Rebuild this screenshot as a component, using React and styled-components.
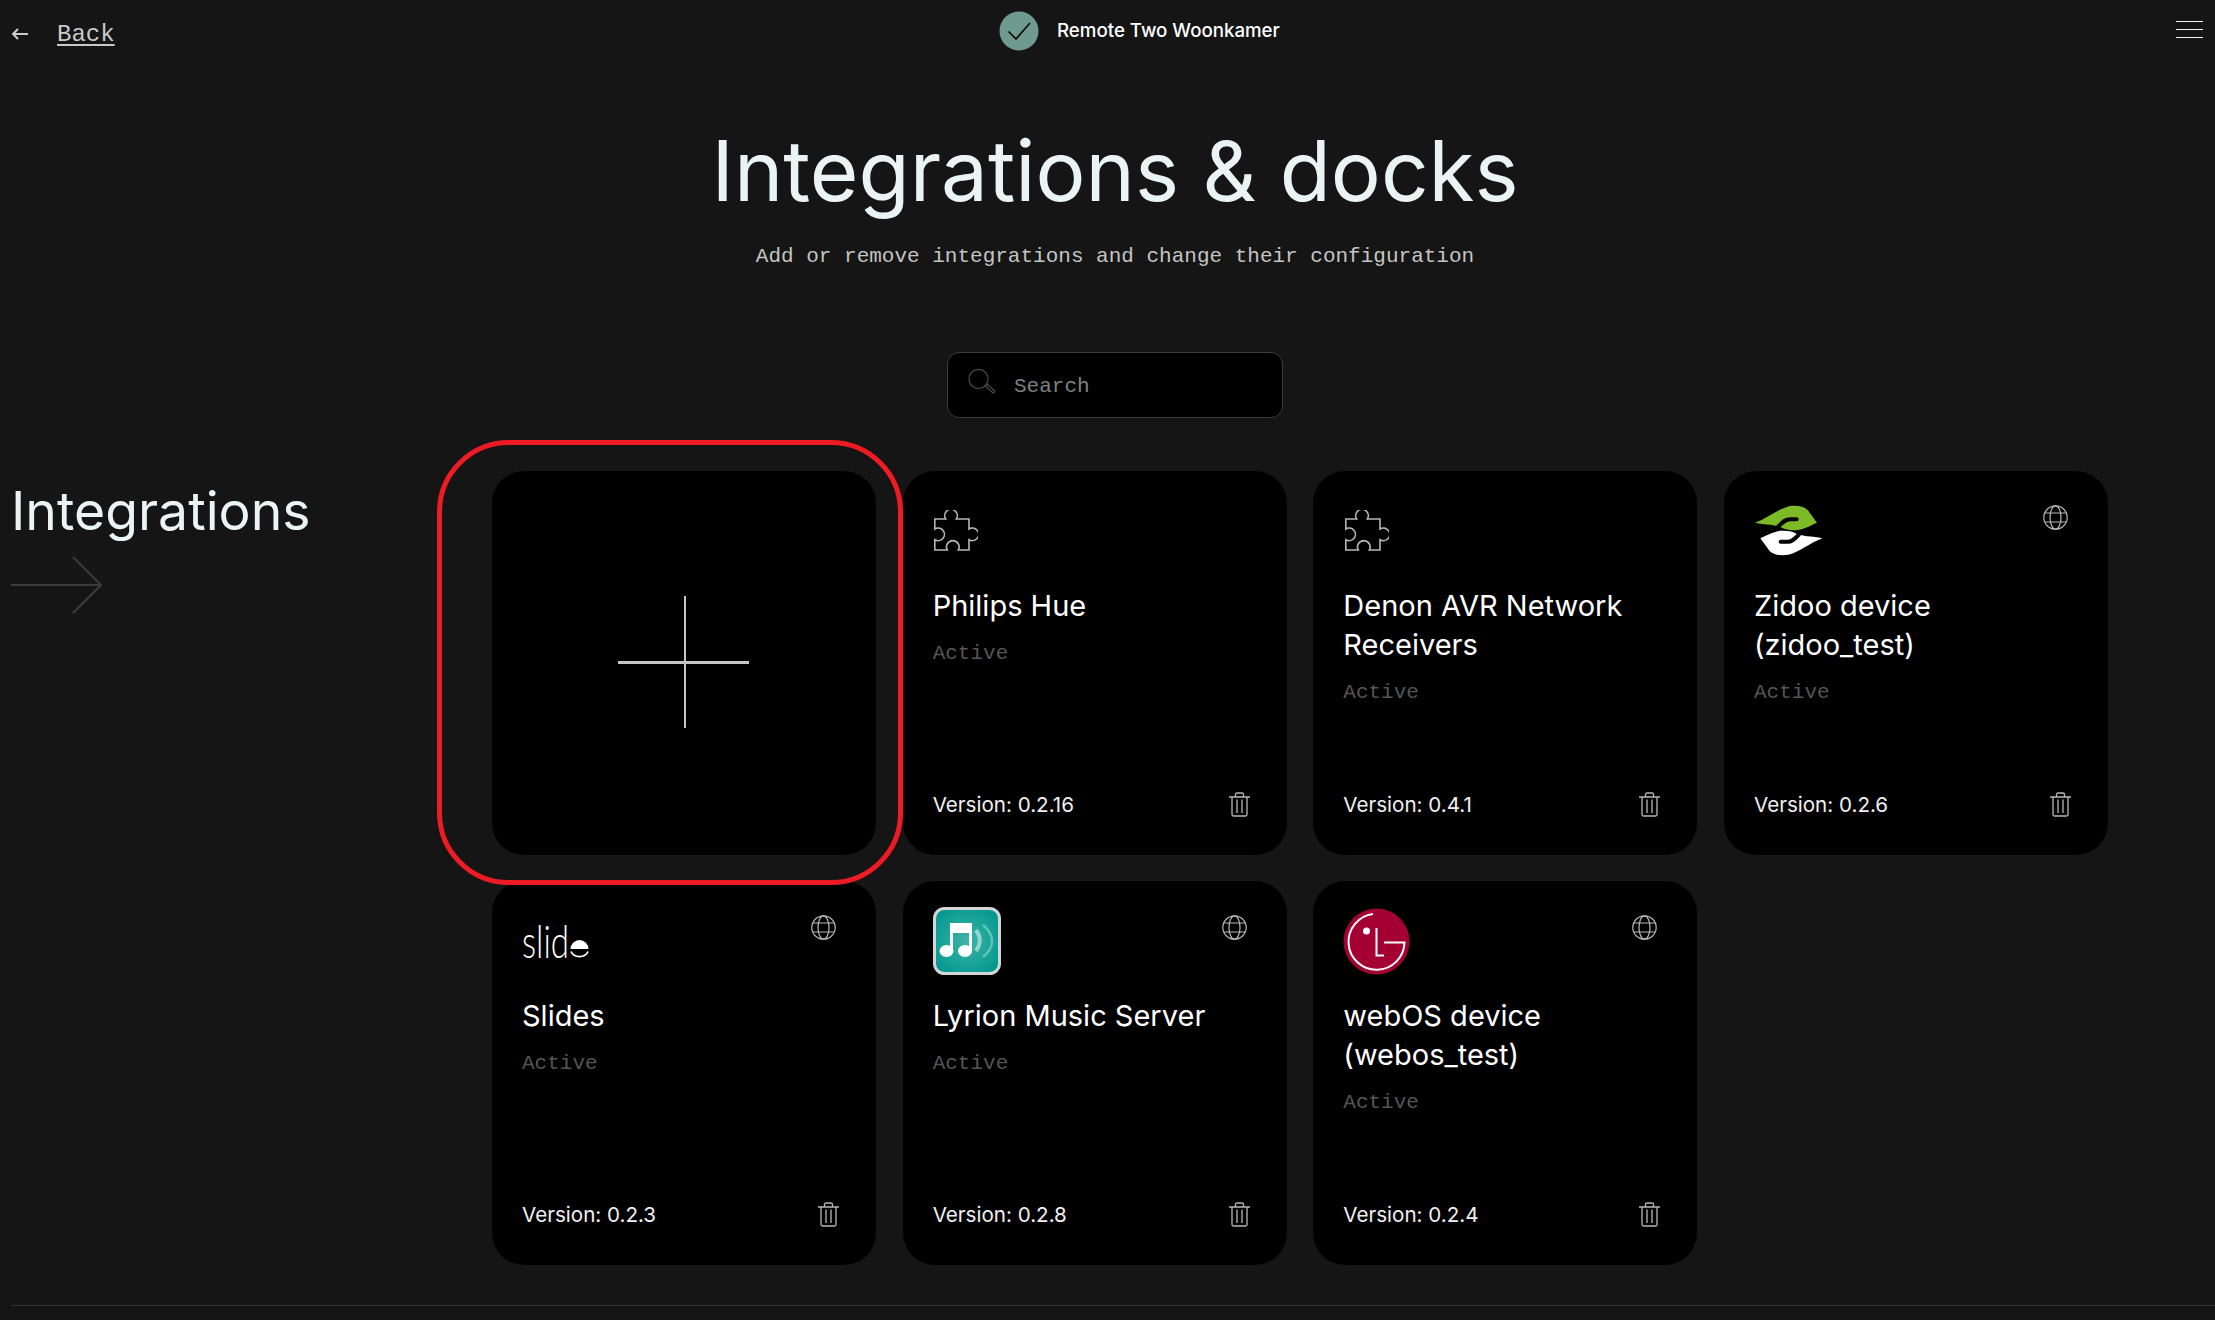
import React from 'react'
import styled, { createGlobalStyle } from 'styled-components'

const GlobalStyle = createGlobalStyle`
  html, body {
    margin: 0;
    padding: 0;
    background: #151515;
    color: #fff;
    font-family: Inter, "Liberation Sans", sans-serif;
  }
  * { box-sizing: border-box; }
`

// [Icons]
const ArrowBack = () => (
  <svg width="17" height="12" viewBox="0 0 17 12" fill="none" stroke="#ccc" strokeWidth="2">
    <path d="M17 6H2M7 1L2 6l5 5" />
  </svg>
)

const CheckIcon = () => (
  <svg width="40" height="40" viewBox="0 0 40 40" fill="none">
    <circle cx="20" cy="20" r="19.5" fill="#6f9a8e" />
    <path d="M9.5 20.5l7.5 7.5L31 12" stroke="#050505" strokeWidth="1.6" />
  </svg>
)

const SearchIcon = () => (
  <svg width="30" height="30" viewBox="0 0 30 30" fill="none" stroke="#4a4a4a" strokeWidth="1.2">
    <circle cx="11.5" cy="11" r="9.6" />
    <path d="M18.5 18l2-1.6 7 6.6c.7.8-.9 2.5-1.8 1.8z" />
  </svg>
)

const Puzzle = () => (
  <svg width="44" height="42" viewBox="0 0 44 42" fill="none" stroke="#b5b5b5" strokeWidth="1.6">
    <path d="M.8 9H11.7A6.3 6.3 0 1 1 22.3 9H35V19A6.3 6.3 0 1 1 35 29.7V40H24.3A6.3 6.3 0 1 0 13.3 40H.8V29.7A6.3 6.3 0 1 0 .8 19Z" />
  </svg>
)

const ZidooHalf = () => (
  <>
    <path d="M103 160C140 146 170 120 205 110C235 106 257 112 267 130L289 160C265 171 245 182 225 182C207 183 190 180 178 172L150 166C132 165 116 163 103 160Z" fill="currentColor" />
    <path d="M228 149H208C194 149 186 158 172 172" stroke="#000" strokeWidth="12" strokeLinecap="round" fill="none" />
  </>
)

const ZidooLogo = () => (
  <svg width="70" height="52" viewBox="100 107 210 155">
    <g color="#7dbb26"><ZidooHalf /></g>
    <g color="#fff" transform="rotate(180 204 183)"><ZidooHalf /></g>
  </svg>
)

const SlideLogo = () => (
  <svg width="68" height="36" viewBox="0 0 68 36" overflow="visible">
    <text x="0" y="35" fontFamily="Lato, sans-serif" fontWeight="300" fontSize="45" fill="#fff" textLength="47" lengthAdjust="spacingAndGlyphs">slid</text>
    <path d="M48.500 26a9 9 0 0 1 18 0z" fill="#fff" />
    <path d="M49 28.500a9 7.500 0 0 0 17 0" stroke="#fff" strokeWidth="1.8" fill="none" />
  </svg>
)

const LyrionLogo = () => (
  <svg width="68" height="68" viewBox="0 0 68 68">
    <defs>
      <radialGradient id="lyrionBg" cx="50%" cy="50%" r="60%">
        <stop offset="0%" stopColor="#3fb3a6" />
        <stop offset="100%" stopColor="#03988f" />
      </radialGradient>
    </defs>
    <rect x="1.500" y="1.500" width="65" height="65" rx="10" fill="url(#lyrionBg)" stroke="#d4d6d6" strokeWidth="3" />
    <path d="M17 16H39V44H36V26H20V44H17Z" fill="#fff" />
    <ellipse cx="13.500" cy="44" rx="7" ry="6" fill="#fff" />
    <ellipse cx="32" cy="44" rx="7" ry="6" fill="#fff" />
    <path d="M43 23c5 7 5 14 0 21" stroke="#8fd6cd" strokeWidth="4" fill="none" />
    <path d="M50 18c12 10 12 22 0 32" stroke="#5dc4b8" strokeWidth="2.500" fill="none" />
  </svg>
)

const LgLogo = () => (
  <svg width="67" height="67" viewBox="0 0 67 67">
    <circle cx="33.500" cy="33.500" r="33" fill="#a50034" />
    <circle cx="23.500" cy="23" r="3.500" fill="#fff" />
    <path d="M33.500 20V47.500H41" stroke="#fff" strokeWidth="2" fill="none" />
    <path d="M41 34.500H61.500A28 28 0 1 1 30 6" stroke="#fff" strokeWidth="2" fill="none" />
  </svg>
)

const Globe = () => (
  <svg width="25" height="25" viewBox="0 0 25 25" fill="none" stroke="#b8b8b8" strokeWidth="1.200">
    <circle cx="12.500" cy="12.500" r="11.700" />
    <ellipse cx="12.500" cy="12.500" rx="5.500" ry="11.700" />
    <path d="M2 8h21M2 17h21" />
  </svg>
)

const Trash = () => (
  <svg width="21" height="25" viewBox="0 0 21 25" fill="none" stroke="#b8b8b8" strokeWidth="1.300">
    <path d="M0 5H21M6.500 5V2.500C6.500 1.500 7 1 8 1H13C14 1 14.500 1.500 14.500 2.500V5" />
    <path d="M3 5V22.500C3 23.500 3.500 24 4.500 24H16.500C17.500 24 18 23.500 18 22.500V5M8 7.500V21M13 7.500V21" />
  </svg>
)

const integrations = [
  { name: 'Philips Hue', version: '0.2.16', icon: <Puzzle />, plain: true },
  { name: 'Denon AVR Network Receivers', version: '0.4.1', icon: <Puzzle />, plain: true },
  { name: 'Zidoo device (zidoo_test)', version: '0.2.6', icon: <ZidooLogo />, network: true },
  { name: 'Slides', version: '0.2.3', icon: <SlideLogo />, network: true },
  { name: 'Lyrion Music Server', version: '0.2.8', icon: <LyrionLogo />, network: true },
  { name: 'webOS device (webos_test)', version: '0.2.4', icon: <LgLogo />, network: true },
]

const App = () => (
  <Page>
    <GlobalStyle />
    <TopBar>
      <BackLink href="#back">
        <ArrowBack />
        <BackText>Back</BackText>
      </BackLink>
      <DockStatus>
        <CheckIcon />
        <DockName>Remote Two Woonkamer</DockName>
      </DockStatus>
      <Hamburger>
        <span />
        <span />
        <span />
      </Hamburger>
    </TopBar>

    <Hero>
      <Title>Integrations &amp; docks</Title>
      <Subtitle>Add or remove integrations and change their configuration</Subtitle>
      <SearchBox>
        <SearchIcon />
        <SearchInput placeholder="Search" />
      </SearchBox>
    </Hero>

    <Section>
      <SectionHead>
        <SectionTitle>Integrations</SectionTitle>
        <svg width="92" height="58" viewBox="0 0 92 58" fill="none" stroke="#3c3c3c" strokeWidth="2">
          <path d="M0 29H90M62 1l28 28-28 28" />
        </svg>
      </SectionHead>
      <CardGrid>
        <AddCell>
          <AddCard>
            <svg width="131" height="132" viewBox="0 0 131 132" fill="#c6c6c6">
              <rect x="0" y="65" width="131" height="3" />
              <rect x="66" y="0" width="2" height="132" />
            </svg>
          </AddCard>
          <Highlight />
        </AddCell>
        {integrations.map((item) => (
          <Card key={item.name}>
            <CardTop>
              <LogoSlot $plain={item.plain}>{item.icon}</LogoSlot>
              {item.network && <Globe />}
            </CardTop>
            <CardName>{item.name}</CardName>
            <CardState>Active</CardState>
            <CardBottom>
              <span>Version: {item.version}</span>
              <Trash />
            </CardBottom>
          </Card>
        ))}
      </CardGrid>
    </Section>
    <FooterLine />
  </Page>
)

const Page = styled.div`
  height: 1320px;
  overflow: hidden;
  background: #151515;
`

const TopBar = styled.header`
  display: grid;
  grid-template-columns: 999px auto 1fr;
  align-items: center;
  height: 62px;
  padding: 0 12px 0 11px;
`

const BackLink = styled.a`
  display: flex;
  align-items: center;
  gap: 29px;
  padding-top: 6px;
  color: #c9c9c9;
  text-decoration: none;
`

const BackText = styled.span`
  font: 24px "Liberation Mono", monospace;
  text-decoration: underline;
  text-underline-offset: 3px;
`

const DockStatus = styled.div`
  display: flex;
  align-items: center;
  gap: 18px;
  margin-left: -11px;
`

const DockName = styled.span`
  font-size: 18.7px;
  font-weight: 500;
  color: #fff;
  margin-bottom: 2px;
`

const Hamburger = styled.div`
  display: flex;
  flex-direction: column;
  gap: 7px;
  justify-self: end;
  width: 27px;
  margin-bottom: 4px;

  span {
    height: 1px;
    background: #f2f2f2;
  }
`

const Hero = styled.section`
  display: flex;
  flex-direction: column;
  align-items: center;
  padding-left: 15px;
  padding-top: 61px;
`

const Title = styled.h1`
  margin: 0;
  font-size: 83.5px;
  line-height: 96px;
  font-weight: 400;
  color: #eaf4f4;
  white-space: nowrap;
`

const Subtitle = styled.p`
  margin: 24px 0 0;
  font: 21px/28px "Liberation Mono", monospace;
  color: #c4c4c4;
`

const SearchBox = styled.div`
  display: flex;
  align-items: center;
  gap: 17px;
  width: 336px;
  height: 66px;
  margin-top: 81px;
  padding: 0 19px 4px;
  background: #000;
  border: 1px solid #3c3c3c;
  border-radius: 12px;
`

const SearchInput = styled.input`
  flex: 1;
  min-width: 0;
  border: none;
  outline: none;
  background: transparent;
  padding: 6px 0 0;
  font: 21px "Liberation Mono", monospace;
  color: #808080;

  &::placeholder {
    color: #808080;
    opacity: 1;
  }
`

const Section = styled.section`
  display: grid;
  grid-template-columns: 481px 1fr;
  margin-top: 53px;
  padding-left: 11px;
`

const SectionHead = styled.div`
  display: flex;
  flex-direction: column;
  align-items: flex-start;
  padding-top: 7px;
`

const SectionTitle = styled.h2`
  margin: 0 0 12px;
  font-size: 53.5px;
  line-height: 66px;
  font-weight: 400;
  color: #eaf4f4;
`

const CardGrid = styled.div`
  display: grid;
  grid-template-columns: repeat(4, 384px);
  grid-auto-rows: 384px;
  column-gap: 26.67px;
  row-gap: 26px;
`

const AddCell = styled.div`
  position: relative;
`

const AddCard = styled.div`
  display: flex;
  align-items: center;
  justify-content: center;
  height: 100%;
  padding: 0 1px 3px 0;
  background: #000;
  border-radius: 32px;
`

const Highlight = styled.div`
  position: absolute;
  top: -31px;
  left: -55px;
  right: -27px;
  bottom: -30px;
  border: 5px solid #ed1c24;
  border-radius: 72px;
  pointer-events: none;
`

const Card = styled.article`
  display: flex;
  flex-direction: column;
  padding: 26px 37px 34px 30px;
  background: #000;
  border-radius: 32px;
`

const CardTop = styled.div`
  display: flex;
  align-items: flex-start;
  justify-content: space-between;
  height: 68px;

  > svg {
    margin-top: 8px;
    margin-right: 3px;
  }
`

const LogoSlot = styled.div`
  display: flex;
  align-items: center;
  height: 68px;
  padding-left: ${(p) => (p.$plain ? '1.5px' : '0')};
`

const CardName = styled.h3`
  margin: 21px 0 0;
  font-size: 29px;
  line-height: 39px;
  font-weight: 400;
  color: #fff;
`

const CardState = styled.div`
  margin-top: 15px;
  font: 21px/28px "Liberation Mono", monospace;
  color: #555;
`

const CardBottom = styled.div`
  display: flex;
  align-items: center;
  justify-content: space-between;
  margin-top: auto;
  font-size: 20.6px;
  line-height: 32px;
  color: #f0f0f0;

  svg {
    margin-top: -1px;
  }
`

const FooterLine = styled.hr`
  margin: 40px 0 0 11px;
  border: none;
  border-top: 1px solid #333;
`

export default App
